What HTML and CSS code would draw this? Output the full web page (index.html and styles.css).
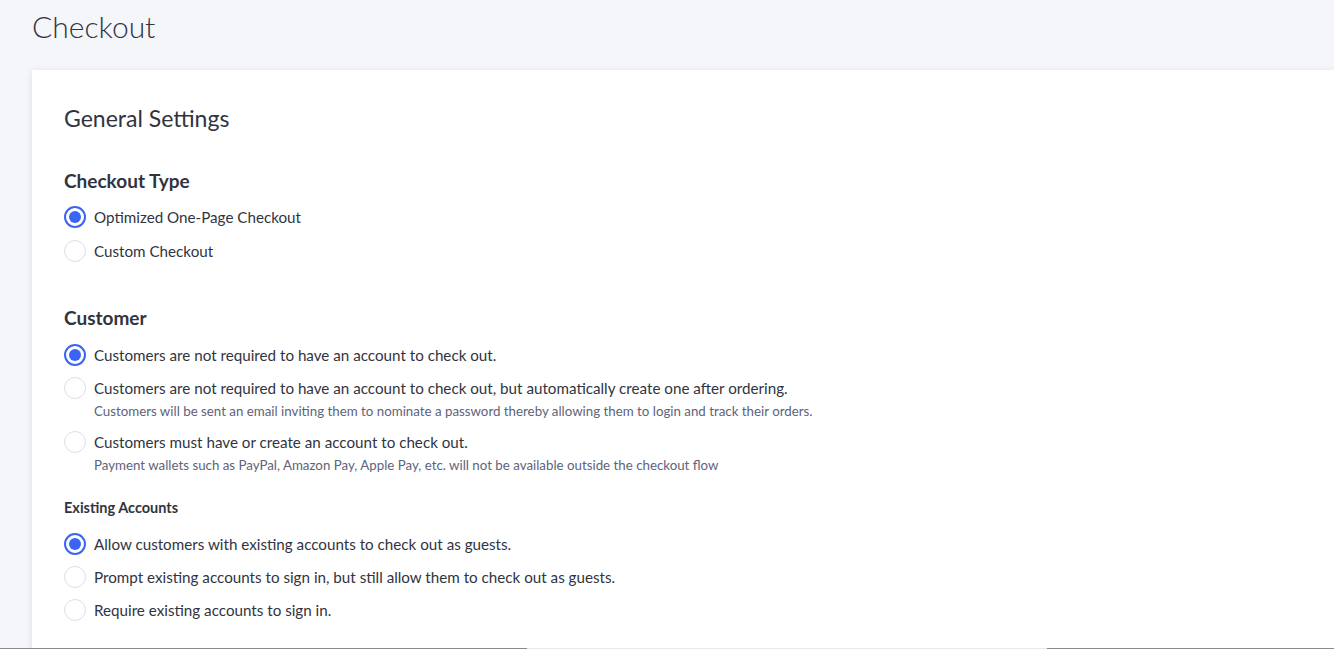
FILE: index.html
```html
<!DOCTYPE html>
<html lang="en">
<head>
<meta charset="utf-8">
<title>Checkout</title>
<link rel="stylesheet" href="styles.css">
</head>
<body>
<div class="page">
  <h1 class="page-title">Checkout</h1>
  <section class="card">
    <h2 class="card-title">General Settings</h2>

    <div class="group">
      <h3 class="group-title">Checkout Type</h3>
      <ul class="radios">
        <li class="radio-row"><span class="radio checked"></span><div class="label"><div class="main">Optimized One-Page Checkout</div></div></li>
        <li class="radio-row"><span class="radio"></span><div class="label"><div class="main">Custom Checkout</div></div></li>
      </ul>
    </div>

    <div class="group customer">
      <h3 class="group-title">Customer</h3>
      <ul class="radios">
        <li class="radio-row"><span class="radio checked"></span><div class="label"><div class="main">Customers are not required to have an account to check out.</div></div></li>
        <li class="radio-row"><span class="radio"></span><div class="label"><div class="main">Customers are not required to have an account to check out, but automatically create one after ordering.</div><div class="desc">Customers will be sent an email inviting them to nominate a password thereby allowing them to login and track their orders.</div></div></li>
        <li class="radio-row"><span class="radio"></span><div class="label"><div class="main">Customers must have or create an account to check out.</div><div class="desc">Payment wallets such as PayPal, Amazon Pay, Apple Pay, etc. will not be available outside the checkout flow</div></div></li>
      </ul>
    </div>

    <div class="group existing">
      <h4 class="sub-title">Existing Accounts</h4>
      <ul class="radios">
        <li class="radio-row"><span class="radio checked"></span><div class="label"><div class="main">Allow customers with existing accounts to check out as guests.</div></div></li>
        <li class="radio-row"><span class="radio"></span><div class="label"><div class="main">Prompt existing accounts to sign in, but still allow them to check out as guests.</div></div></li>
        <li class="radio-row"><span class="radio"></span><div class="label"><div class="main">Require existing accounts to sign in.</div></div></li>
      </ul>
    </div>
  </section>
</div>
<div class="hscroll"><span class="thumb"></span></div>
</body>
</html>
```
FILE: styles.css
```css
* { box-sizing: border-box; }
html, body { margin: 0; padding: 0; }
body {
  background: #f5f6fa;
  font-family: "Lato", "Open Sans", sans-serif;
  color: #313440;
  height: 649px;
  overflow: hidden;
}
.page {
  padding: 0 0 0 32px;
}
.page-title {
  margin: 0;
  padding-top: 8px;
  height: 70px;
  font-size: 30px;
  font-weight: 300;
  line-height: 36px;
  color: #313440;
}
.card {
  background: #fff;
  box-shadow: 0 1px 6px rgba(49, 52, 64, 0.12);
  padding: 36px 32px 40px 32px;
  min-height: 600px;
}
.card-title {
  margin: 0;
  font-size: 23px;
  font-weight: 400;
  line-height: 24px;
}
.group { margin-top: 39px; }
.group-title {
  margin: 0 0 13px;
  font-size: 19px;
  font-weight: 700;
  line-height: 24px;
}
.group.customer { margin-top: 44px; }
.group.customer .group-title { margin-bottom: 14px; }
.group.existing { margin-top: 25px; }
.sub-title {
  margin: 0 0 16px;
  font-size: 14.5px;
  font-weight: 700;
  line-height: 18px;
}
.radios {
  list-style: none;
  margin: 0;
  padding: 0;
  display: flex;
  flex-direction: column;
  gap: 11px;
}
.group:first-of-type .radios { gap: 12px; }
.radio-row {
  display: flex;
  align-items: flex-start;
  gap: 8px;
}
.radio {
  flex: none;
  width: 22px;
  height: 22px;
  border-radius: 50%;
  border: 1px solid #dcdfea;
  background: #fff;
  position: relative;
}
.radio.checked {
  border: 2px solid #3c64f4;
}
.radio.checked::after {
  content: "";
  position: absolute;
  left: 3px;
  top: 3px;
  width: 12px;
  height: 12px;
  border-radius: 50%;
  background: #3c64f4;
}
.label .main {
  font-size: 15.2px;
  line-height: 22px;
}
.label .desc {
  font-size: 13.3px;
  line-height: 18px;
  color: #5e637a;
  margin-top: 3px;
}
.hscroll {
  position: fixed;
  left: 0;
  right: 0;
  bottom: 0;
  height: 1px;
  background: #8a8a8a;
}
.hscroll .thumb {
  position: absolute;
  left: 527px;
  width: 520px;
  top: 0;
  height: 1px;
  background: #e8e8f0;
}
```
